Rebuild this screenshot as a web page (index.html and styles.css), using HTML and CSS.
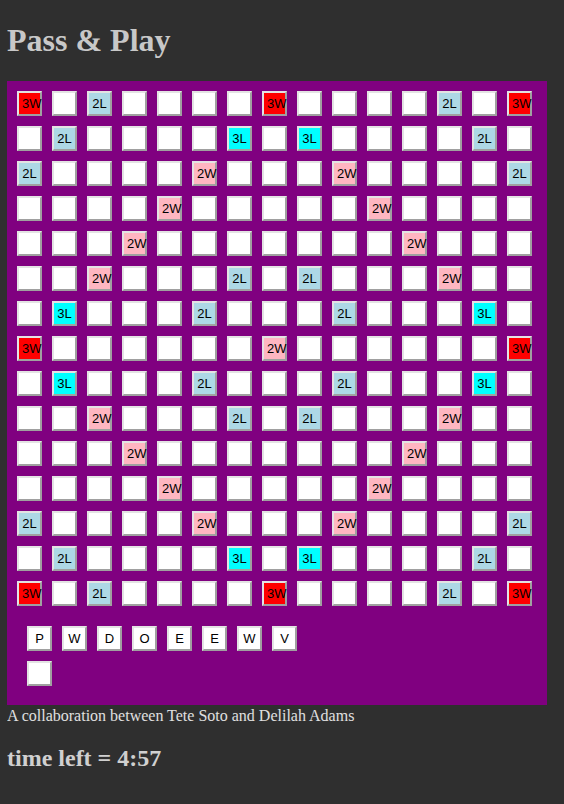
FILE: index.html
```html
<!DOCTYPE html>
<html>
<head>
<meta charset="utf-8">
<title>Pass &amp; Play</title>
<link rel="stylesheet" href="styles.css">
</head>
<body>
<h1 class="title">Pass &amp; Play</h1>
<div class="game">
  <div class="board">
    <button class="sq tw">3W</button><button class="sq"></button><button class="sq dl">2L</button><button class="sq"></button><button class="sq"></button><button class="sq"></button><button class="sq"></button><button class="sq tw">3W</button><button class="sq"></button><button class="sq"></button><button class="sq"></button><button class="sq"></button><button class="sq dl">2L</button><button class="sq"></button><button class="sq tw">3W</button>
    <button class="sq"></button><button class="sq dl">2L</button><button class="sq"></button><button class="sq"></button><button class="sq"></button><button class="sq"></button><button class="sq tl">3L</button><button class="sq"></button><button class="sq tl">3L</button><button class="sq"></button><button class="sq"></button><button class="sq"></button><button class="sq"></button><button class="sq dl">2L</button><button class="sq"></button>
    <button class="sq dl">2L</button><button class="sq"></button><button class="sq"></button><button class="sq"></button><button class="sq"></button><button class="sq dw">2W</button><button class="sq"></button><button class="sq"></button><button class="sq"></button><button class="sq dw">2W</button><button class="sq"></button><button class="sq"></button><button class="sq"></button><button class="sq"></button><button class="sq dl">2L</button>
    <button class="sq"></button><button class="sq"></button><button class="sq"></button><button class="sq"></button><button class="sq dw">2W</button><button class="sq"></button><button class="sq"></button><button class="sq"></button><button class="sq"></button><button class="sq"></button><button class="sq dw">2W</button><button class="sq"></button><button class="sq"></button><button class="sq"></button><button class="sq"></button>
    <button class="sq"></button><button class="sq"></button><button class="sq"></button><button class="sq dw">2W</button><button class="sq"></button><button class="sq"></button><button class="sq"></button><button class="sq"></button><button class="sq"></button><button class="sq"></button><button class="sq"></button><button class="sq dw">2W</button><button class="sq"></button><button class="sq"></button><button class="sq"></button>
    <button class="sq"></button><button class="sq"></button><button class="sq dw">2W</button><button class="sq"></button><button class="sq"></button><button class="sq"></button><button class="sq dl">2L</button><button class="sq"></button><button class="sq dl">2L</button><button class="sq"></button><button class="sq"></button><button class="sq"></button><button class="sq dw">2W</button><button class="sq"></button><button class="sq"></button>
    <button class="sq"></button><button class="sq tl">3L</button><button class="sq"></button><button class="sq"></button><button class="sq"></button><button class="sq dl">2L</button><button class="sq"></button><button class="sq"></button><button class="sq"></button><button class="sq dl">2L</button><button class="sq"></button><button class="sq"></button><button class="sq"></button><button class="sq tl">3L</button><button class="sq"></button>
    <button class="sq tw">3W</button><button class="sq"></button><button class="sq"></button><button class="sq"></button><button class="sq"></button><button class="sq"></button><button class="sq"></button><button class="sq dw">2W</button><button class="sq"></button><button class="sq"></button><button class="sq"></button><button class="sq"></button><button class="sq"></button><button class="sq"></button><button class="sq tw">3W</button>
    <button class="sq"></button><button class="sq tl">3L</button><button class="sq"></button><button class="sq"></button><button class="sq"></button><button class="sq dl">2L</button><button class="sq"></button><button class="sq"></button><button class="sq"></button><button class="sq dl">2L</button><button class="sq"></button><button class="sq"></button><button class="sq"></button><button class="sq tl">3L</button><button class="sq"></button>
    <button class="sq"></button><button class="sq"></button><button class="sq dw">2W</button><button class="sq"></button><button class="sq"></button><button class="sq"></button><button class="sq dl">2L</button><button class="sq"></button><button class="sq dl">2L</button><button class="sq"></button><button class="sq"></button><button class="sq"></button><button class="sq dw">2W</button><button class="sq"></button><button class="sq"></button>
    <button class="sq"></button><button class="sq"></button><button class="sq"></button><button class="sq dw">2W</button><button class="sq"></button><button class="sq"></button><button class="sq"></button><button class="sq"></button><button class="sq"></button><button class="sq"></button><button class="sq"></button><button class="sq dw">2W</button><button class="sq"></button><button class="sq"></button><button class="sq"></button>
    <button class="sq"></button><button class="sq"></button><button class="sq"></button><button class="sq"></button><button class="sq dw">2W</button><button class="sq"></button><button class="sq"></button><button class="sq"></button><button class="sq"></button><button class="sq"></button><button class="sq dw">2W</button><button class="sq"></button><button class="sq"></button><button class="sq"></button><button class="sq"></button>
    <button class="sq dl">2L</button><button class="sq"></button><button class="sq"></button><button class="sq"></button><button class="sq"></button><button class="sq dw">2W</button><button class="sq"></button><button class="sq"></button><button class="sq"></button><button class="sq dw">2W</button><button class="sq"></button><button class="sq"></button><button class="sq"></button><button class="sq"></button><button class="sq dl">2L</button>
    <button class="sq"></button><button class="sq dl">2L</button><button class="sq"></button><button class="sq"></button><button class="sq"></button><button class="sq"></button><button class="sq tl">3L</button><button class="sq"></button><button class="sq tl">3L</button><button class="sq"></button><button class="sq"></button><button class="sq"></button><button class="sq"></button><button class="sq dl">2L</button><button class="sq"></button>
    <button class="sq tw">3W</button><button class="sq"></button><button class="sq dl">2L</button><button class="sq"></button><button class="sq"></button><button class="sq"></button><button class="sq"></button><button class="sq tw">3W</button><button class="sq"></button><button class="sq"></button><button class="sq"></button><button class="sq"></button><button class="sq dl">2L</button><button class="sq"></button><button class="sq tw">3W</button>
  </div>
  <div class="rack">
    <button class="sq tile">P</button><button class="sq tile">W</button><button class="sq tile">D</button><button class="sq tile">O</button><button class="sq tile">E</button><button class="sq tile">E</button><button class="sq tile">W</button><button class="sq tile">V</button><button class="sq tile"></button>
  </div>
</div>
<div class="credit">A collaboration between Tete Soto and Delilah Adams</div>
<h2 class="timer">time left = 4:57</h2>
</body>
</html>
```
FILE: styles.css
```css
html, body {
  background: #2f2f2f;
}
body {
  margin: 0 8px 8px 7px;
  padding-top: 0.1px;
  font-family: "Liberation Serif", "Times New Roman", serif;
  color: #dcdcdc;
}
.title {
  font-size: 32px;
  line-height: 37px;
  font-weight: bold;
  margin: 22px 0 22px;
  color: #c8c8c8;
}
.game {
  width: 540px;
  box-sizing: border-box;
  background: #800080;
  padding: 10px 0 19px 10px;
}
.board {
  display: grid;
  grid-template-columns: repeat(15, 25px);
  grid-auto-rows: 25px;
  gap: 10px;
}
.sq {
  width: 25px;
  height: 25px;
  box-sizing: border-box;
  margin: 0;
  padding: 0 3px;
  background: #ffffff;
  border: 2px solid;
  border-color: #e3e3e3 #a0a0a0 #a0a0a0 #e3e3e3;
  font-family: "Liberation Sans", Arial, sans-serif;
  font-size: 13px;
  color: #000;
  text-align: center;
  white-space: nowrap;
  overflow: visible;
  line-height: 21px;
}
.tw { background: #ff0000; }
.dw { background: #ffb6c1; }
.dl { background: #add8e6; }
.tl { background: #00ffff; }
.rack {
  margin-top: 20px;
  padding-left: 10px;
  width: 280px;
  display: flex;
  flex-wrap: wrap;
  gap: 10px;
}
.tile {
  font-size: 13px;
}
.credit {
  font-size: 16px;
  line-height: 19px;
  padding-top: 1px;
  color: #e0e0e0;
}
.timer {
  font-size: 24px;
  font-weight: bold;
  margin: 20px 0;
  color: #d0d0d0;
}
```
